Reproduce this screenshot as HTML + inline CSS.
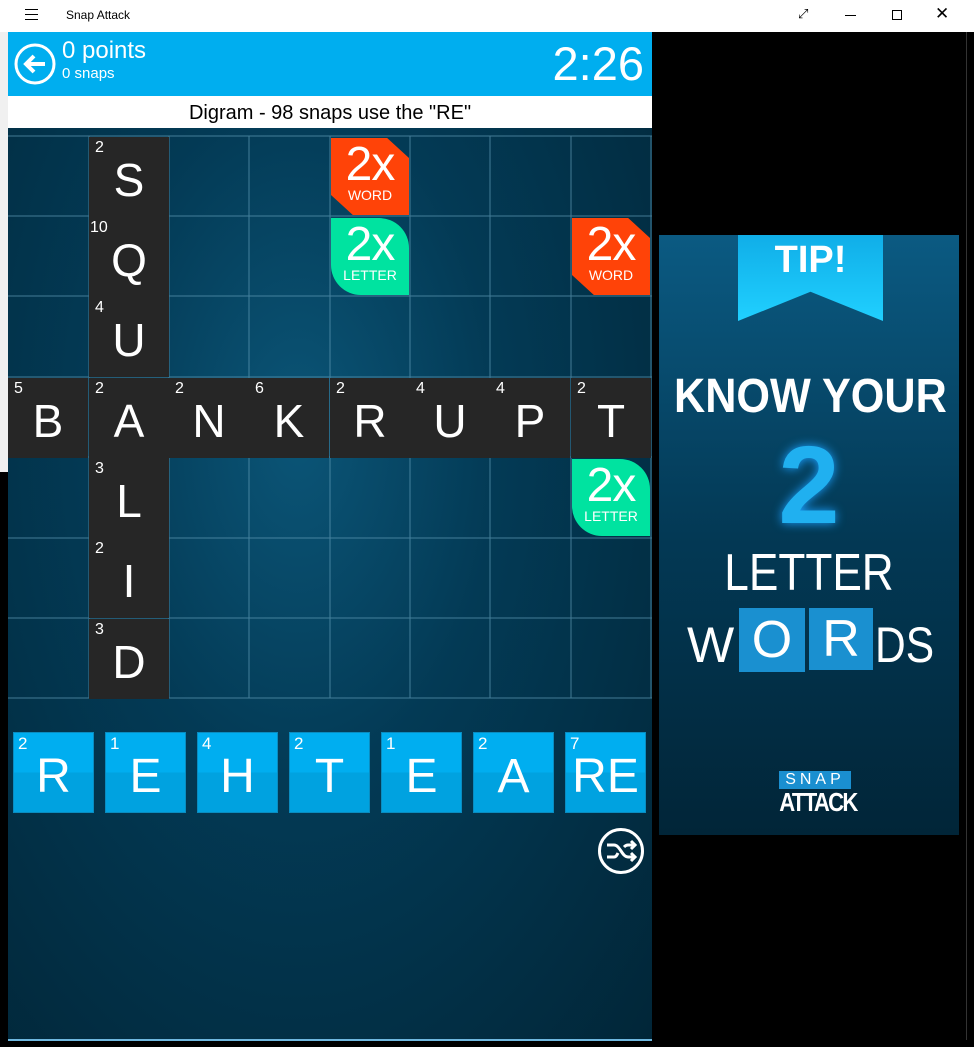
<!DOCTYPE html>
<html><head><meta charset="utf-8"><style>
*{margin:0;padding:0;box-sizing:border-box}
body{width:974px;height:1047px;background:#000;position:relative;overflow:hidden;font-family:"Liberation Sans",sans-serif;color:#fff}
.a{position:absolute}
.cell{position:absolute;width:80px;height:80px;background:#262626}
.cell .n{position:absolute;left:6px;top:2px;font-size:16px}
.cell .l{position:absolute;left:0;right:0;top:16px;text-align:center;font-size:46px}
.b{position:absolute;width:78px;height:77px;text-align:center}
.b .x{font-size:48px;line-height:46px;margin-top:4px;letter-spacing:-1px}
.b .t{font-size:14px;line-height:14px}
.w{background:#ff4308;clip-path:polygon(0 0,72% 0,100% 26%,100% 100%,28% 100%,0 74%)}
.g{background:#00e3a0;border-radius:0 30px 0 30px}
.tile{position:absolute;top:732px;width:81px;height:81px;background:linear-gradient(#00aef0 50%,#00a2e0 50%);border:1px solid #0a8cc0}
.tile .n{position:absolute;left:4px;top:1px;font-size:17px}
.tile .l{position:absolute;left:0;right:0;top:16px;text-align:center;font-size:48px}
.nw{white-space:nowrap}
</style></head><body>
<div class="a" style="left:0;top:0;width:974px;height:32px;background:#fff;color:#000">
 <div class="a" style="left:25px;top:9px;width:13px;height:1px;background:#000;box-shadow:0 5px 0 #000,0 10px 0 #000"></div>
 <div class="a" style="left:66px;top:8px;font-size:12px">Snap Attack</div>
 <div class="a" style="left:798px;top:6px;font-size:13px">⤢</div>
 <div class="a" style="left:845px;top:15px;width:11px;height:1px;background:#000"></div>
 <div class="a" style="left:892px;top:10px;width:10px;height:10px;border:1px solid #000"></div>
 <div class="a" style="left:935px;top:4px;font-size:17px">✕</div>
</div>
<div class="a" style="left:0;top:32px;width:8px;height:440px;background:#f0f0f0"></div>
<div class="a" style="left:8px;top:32px;width:644px;height:1008px;background:radial-gradient(ellipse at 45% 40%,#0b5577 0%,#033a55 40%,#012638 100%)"></div>
<div class="a" style="left:8px;top:1039px;width:644px;height:2px;background:#6fb8e0"></div>
<div class="a" style="left:8px;top:32px;width:644px;height:64px;background:#00aeef">
 <svg class="a" style="left:6px;top:11px" width="42" height="42" viewBox="0 0 42 42"><circle cx="21" cy="21" r="19" fill="none" stroke="#fff" stroke-width="3"/><path d="M31 21H12M20 13l-8 8 8 8" fill="none" stroke="#fff" stroke-width="4"/></svg>
 <div class="a" style="left:54px;top:5px;font-size:24px">0 points</div>
 <div class="a" style="left:54px;top:33px;font-size:15px">0 snaps</div>
 <div class="a" style="right:8px;top:4px;font-size:47px">2:26</div>
</div>
<div class="a" style="left:8px;top:96px;width:644px;height:32px;background:#fff;color:#000;text-align:center;font-size:20px;line-height:34px">Digram - 98 snaps use the "RE"</div>
<svg class="a" style="left:8px;top:128px" width="644" height="572">
<g stroke="#5f9ab5" stroke-width="1" opacity=".7">
<line x1="0" y1="8" x2="644" y2="8"/><line x1="0" y1="88" x2="644" y2="88"/><line x1="0" y1="168" x2="644" y2="168"/><line x1="0" y1="249" x2="644" y2="249"/><line x1="0" y1="329" x2="644" y2="329"/><line x1="0" y1="410" x2="644" y2="410"/><line x1="0" y1="490" x2="644" y2="490"/><line x1="0" y1="570" x2="644" y2="570"/>
<line x1="81" y1="8" x2="81" y2="570"/><line x1="161" y1="8" x2="161" y2="570"/><line x1="241" y1="8" x2="241" y2="570"/><line x1="322" y1="8" x2="322" y2="570"/><line x1="402" y1="8" x2="402" y2="570"/><line x1="482" y1="8" x2="482" y2="570"/><line x1="563" y1="8" x2="563" y2="570"/><line x1="643" y1="8" x2="643" y2="570"/>
</g></svg>
<div class="cell" style="left:89px;top:137px"><span class="n">2</span><span class="l">S</span></div>
<div class="cell" style="left:89px;top:217px"><span class="n" style="left:1px">10</span><span class="l">Q</span></div>
<div class="cell" style="left:89px;top:297px"><span class="n">4</span><span class="l">U</span></div>
<div class="cell" style="left:8px;top:378px"><span class="n">5</span><span class="l">B</span></div>
<div class="cell" style="left:89px;top:378px"><span class="n">2</span><span class="l">A</span></div>
<div class="cell" style="left:169px;top:378px"><span class="n">2</span><span class="l">N</span></div>
<div class="cell" style="left:249px;top:378px"><span class="n">6</span><span class="l">K</span></div>
<div class="cell" style="left:330px;top:378px"><span class="n">2</span><span class="l">R</span></div>
<div class="cell" style="left:410px;top:378px"><span class="n">4</span><span class="l">U</span></div>
<div class="cell" style="left:490px;top:378px"><span class="n">4</span><span class="l">P</span></div>
<div class="cell" style="left:571px;top:378px"><span class="n">2</span><span class="l">T</span></div>
<div class="cell" style="left:89px;top:458px"><span class="n">3</span><span class="l">L</span></div>
<div class="cell" style="left:89px;top:538px"><span class="n">2</span><span class="l">I</span></div>
<div class="cell" style="left:89px;top:619px"><span class="n">3</span><span class="l">D</span></div>
<div class="b w" style="left:331px;top:138px"><div class="x">2x</div><div class="t">WORD</div></div>
<div class="b g" style="left:331px;top:218px"><div class="x">2x</div><div class="t">LETTER</div></div>
<div class="b w" style="left:572px;top:218px"><div class="x">2x</div><div class="t">WORD</div></div>
<div class="b g" style="left:572px;top:459px"><div class="x">2x</div><div class="t">LETTER</div></div>
<div class="tile" style="left:13px"><span class="n">2</span><span class="l">R</span></div>
<div class="tile" style="left:105px"><span class="n">1</span><span class="l">E</span></div>
<div class="tile" style="left:197px"><span class="n">4</span><span class="l">H</span></div>
<div class="tile" style="left:289px"><span class="n">2</span><span class="l">T</span></div>
<div class="tile" style="left:381px"><span class="n">1</span><span class="l">E</span></div>
<div class="tile" style="left:473px"><span class="n">2</span><span class="l">A</span></div>
<div class="tile" style="left:565px"><span class="n">7</span><span class="l">RE</span></div>
<svg class="a" style="left:597px;top:827px" width="48" height="48" viewBox="0 0 48 48"><circle cx="24" cy="24" r="21.5" fill="none" stroke="#fff" stroke-width="3"/><path d="M10 18h7c6 0 8 12 14 12h6M10 30h7c2 0 3-2 4-4M27 20c1-1 2-2 4-2h6M34 14l4 4-4 4M34 26l4 4-4 4" fill="none" stroke="#fff" stroke-width="3"/></svg>
<div class="a" style="left:966px;top:32px;width:1px;height:1008px;background:#333"></div>
<div class="a" style="left:659px;top:235px;width:300px;height:600px;background:linear-gradient(#0b5a82,#033955 50%,#012538);overflow:hidden">
 <div class="a" style="left:79px;top:0;width:145px;height:86px;background:linear-gradient(#10aee8,#20d0ff);clip-path:polygon(0 0,100% 0,100% 100%,50% 66%,0 100%)"></div>
 <div class="a" style="left:79px;top:4px;width:145px;text-align:center;font-size:38px;font-weight:bold">TIP!</div>
 <div class="a nw" style="left:0;top:134px;width:300px;text-align:center;font-size:48px;line-height:56px;font-weight:bold;transform:scaleX(.9)">KNOW YOUR</div>
 <div class="a" style="left:0;top:196px;width:300px;text-align:center;font-size:110px;font-weight:bold;color:#20b0f0;line-height:110px;text-shadow:0 0 10px #1aa0ff">2</div>
 <div class="a nw" style="left:0;top:308px;width:300px;text-align:center;font-size:52px;line-height:60px;transform:scaleX(.85)">LETTER</div>
 <div class="a" style="left:28px;top:380px;font-size:50px;line-height:60px">W</div>
 <div class="a" style="left:80px;top:373px;width:66px;height:64px;background:#1a90d0;text-align:center;font-size:52px;line-height:64px">O</div>
 <div class="a" style="left:150px;top:373px;width:64px;height:62px;background:#1a90d0;text-align:center;font-size:52px;line-height:62px">R</div>
 <div class="a nw" style="left:216px;top:380px;font-size:50px;line-height:60px;transform:scaleX(.85);transform-origin:left">DS</div>
 <div class="a" style="left:120px;top:536px;width:72px;height:18px;background:#1a8fd0;font-size:16px;line-height:18px;text-align:center;letter-spacing:4px">SNAP</div>
 <div class="a nw" style="left:114px;top:552px;width:84px;text-align:center;font-size:26px;font-weight:bold;letter-spacing:-2px;transform:scaleX(.85)">ATTACK</div>
</div>
</body></html>
